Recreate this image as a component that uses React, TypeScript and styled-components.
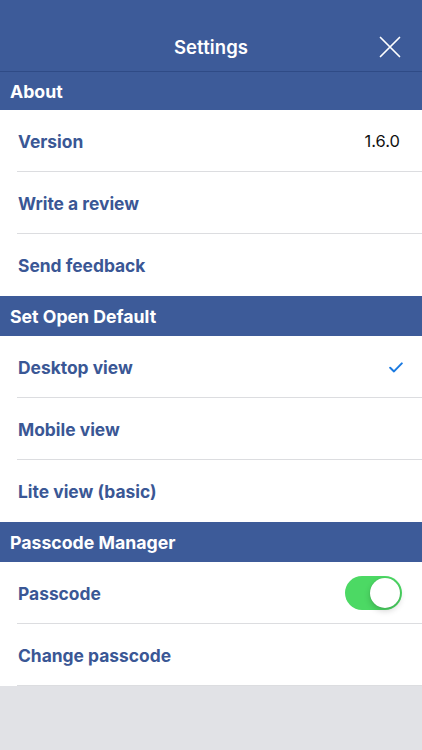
import React, { useState } from 'react';
import styled, { createGlobalStyle } from 'styled-components';

const GlobalStyle = createGlobalStyle`
  html, body {
    margin: 0;
    padding: 0;
    background: #e1e2e6;
  }
  body {
    font-family: Inter, "Liberation Sans", Arial, sans-serif;
    -webkit-font-smoothing: antialiased;
  }
`;

type Row = {
    label: string;
    value?: string;
    checked?: boolean;
    toggle?: boolean;
};

type Section = {
    title: string;
    rows: Row[];
};

const sections: Section[] = [
    {
        title: 'About',
        rows: [
            { label: 'Version', value: '1.6.0' },
            { label: 'Write a review' },
            { label: 'Send feedback' },
        ],
    },
    {
        title: 'Set Open Default',
        rows: [
            { label: 'Desktop view', checked: true },
            { label: 'Mobile view' },
            { label: 'Lite view (basic)' },
        ],
    },
    {
        title: 'Passcode Manager',
        rows: [
            { label: 'Passcode', toggle: true },
            { label: 'Change passcode' },
        ],
    },
];

const CloseIcon = () => (
    <svg width="22" height="22" viewBox="0 0 22 22" fill="none">
        <path d="M1.5 1.5 L20.5 20.5 M20.5 1.5 L1.5 20.5" stroke="#fff" strokeWidth="1.7" strokeLinecap="round" />
    </svg>
);

const CheckIcon = () => (
    <svg width="14" height="11" viewBox="0 0 14 11" fill="none">
        <path d="M1.2 5.8 L5 9.4 L12.8 1.4" stroke="#1b7ae0" strokeWidth="2" strokeLinecap="round" strokeLinejoin="round" />
    </svg>
);

const App: React.FC = () => {
    const [passcode, setPasscode] = useState(true);

    return (
        <>
            <GlobalStyle />
            <Page>
                <NavBar>
                    <NavTitle>Settings</NavTitle>
                    <CloseButton aria-label="Close">
                        <CloseIcon />
                    </CloseButton>
                </NavBar>
                {sections.map((section, i) => (
                    <div key={section.title}>
                        <SectionHeader first={i === 0}>{section.title}</SectionHeader>
                        {section.rows.map((row, j) => (
                            <RowItem key={row.label} last={j === section.rows.length - 1 && i < sections.length - 1}>
                                <RowLabel>{row.label}</RowLabel>
                                {row.value && <RowValue>{row.value}</RowValue>}
                                {row.checked && <CheckWrap><CheckIcon /></CheckWrap>}
                                {row.toggle && (
                                    <Switch on={passcode} onClick={() => setPasscode(!passcode)}>
                                        <Knob on={passcode} />
                                    </Switch>
                                )}
                            </RowItem>
                        ))}
                    </div>
                ))}
            </Page>
        </>
    );
};

const Page = styled.div`
    width: 100%;
    min-height: 750px;
    background: #e1e2e6;
`;

const NavBar = styled.div`
    height: 72px;
    background: #3d5b99;
    border-bottom: 1px solid #2f4b86;
    box-sizing: border-box;
    display: flex;
    align-items: center;
    justify-content: center;
    padding-top: 22px;
    position: relative;
`;

const NavTitle = styled.div`
    color: #fff;
    font-size: 18.5px;
    font-weight: 600;
    letter-spacing: 0.1px;
`;

const CloseButton = styled.div`
    position: absolute;
    right: 21px;
    top: 36px;
    width: 22px;
    height: 22px;
    display: flex;
`;

const SectionHeader = styled.div<{ first?: boolean }>`
    height: ${p => (p.first ? 38 : 40)}px;
    background: #3d5b99;
    color: #fff;
    font-size: 17.7px;
    font-weight: 700;
    display: flex;
    align-items: center;
    padding-left: 10px;
    box-sizing: border-box;
`;

const RowItem = styled.div<{ last?: boolean }>`
    height: 62px;
    background: #fff;
    display: flex;
    align-items: center;
    padding: 0 21px 0 18px;
    box-sizing: border-box;
    position: relative;
    &::after {
        content: "";
        display: ${p => (p.last ? 'none' : 'block')};
        position: absolute;
        left: 17px;
        right: 0;
        bottom: 0;
        height: 1px;
        background: #dcdde0;
    }
`;

const RowLabel = styled.div`
    flex: 1;
    color: #3a5795;
    font-size: 17.4px;
    font-weight: 700;
`;

const RowValue = styled.div`
    color: #111;
    font-size: 16.5px;
    font-weight: 400;
    margin-right: 1px;
`;

const CheckWrap = styled.div`
    display: flex;
    margin-right: -2px;
`;

const Switch = styled.div<{ on: boolean }>`
    width: 57px;
    height: 34px;
    border-radius: 17px;
    background: ${p => (p.on ? '#4cd964' : '#e5e5ea')};
    display: flex;
    align-items: center;
    justify-content: ${p => (p.on ? 'flex-end' : 'flex-start')};
    padding: 2px;
    box-sizing: border-box;
    margin-right: -1px;
    cursor: pointer;
`;

const Knob = styled.div<{ on: boolean }>`
    width: 30px;
    height: 30px;
    border-radius: 50%;
    background: #fff;
    box-shadow: 0 3px 6px rgba(0, 0, 0, 0.18), 0 0 1px rgba(0, 0, 0, 0.2);
`;

export default App;
